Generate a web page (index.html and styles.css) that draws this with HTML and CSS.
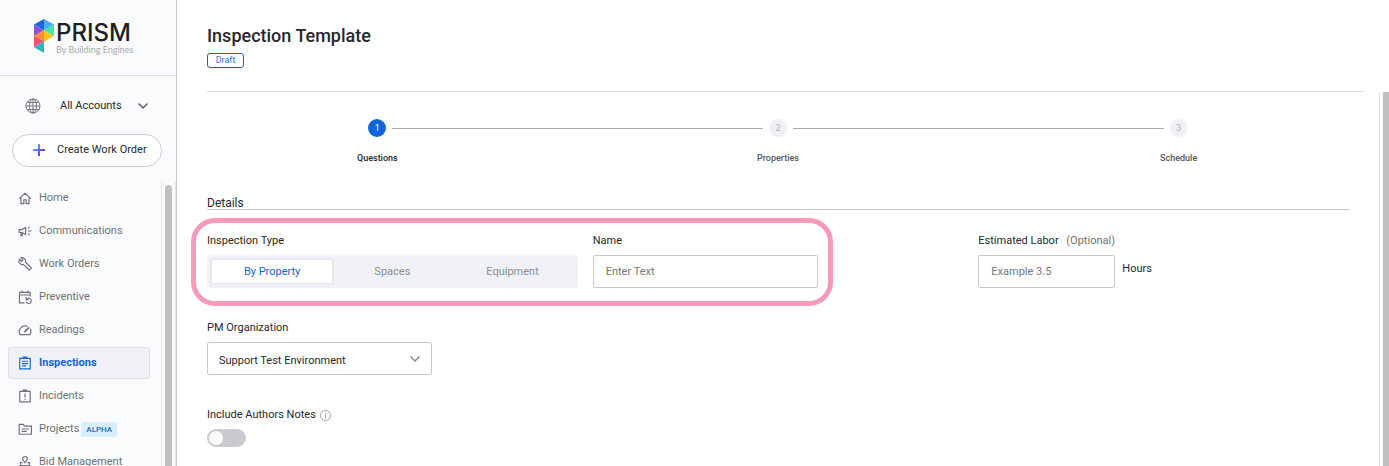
FILE: index.html
```html
<!DOCTYPE html>
<html lang="en">
<head>
    <meta charset="UTF-8">
    <meta name="viewport" content="width=device-width, initial-scale=1.0">
    <title>Prism - Inspection Template</title>
    <link rel="stylesheet" href="styles.css">
</head>
<body>
    <div class="app">
        <aside class="sidebar">
            <div class="logo">
                <svg class="logo-mark" width="20" height="34" viewBox="0 0 57 100" preserveAspectRatio="none">
                    <path fill="#1565df" d="M28.500 0L0 16l28.500 17z"/>
                    <path fill="#4badf8" d="M28.500 0L57 16 28.500 33z"/>
                    <path fill="#8a56cc" d="M0 16l28.500 17L0 50z"/>
                    <path fill="#3ee6a0" d="M57 16L28.500 33 57 50z"/>
                    <path fill="#ff8b3d" d="M28.500 33L0 50l28.500 16z"/>
                    <path fill="#fcc419" d="M28.500 33L57 50 28.500 66z"/>
                    <path fill="#fb4b70" d="M0 50l28.500 16L0 83z"/>
                    <path fill="#2ab9c4" d="M28.500 66L0 83l28.500 17z"/>
                </svg>
                <div class="logo-text">
                    <span class="logo-name">PRISM</span>
                    <span class="logo-sub">By Building Engines</span>
                </div>
            </div>

            <button class="account" type="button">
                <svg class="globe" width="16" height="16" viewBox="0 0 16 16">
                    <circle cx="8" cy="8" r="7"/>
                    <ellipse cx="8" cy="8" rx="3.500" ry="7"/>
                    <path d="M8 1v14M1 8h14M2.200 4.500h11.600M2.200 11.500h11.600"/>
                </svg>
                <span>All Accounts</span>
                <svg class="chevron" width="12" height="8" viewBox="0 0 12 8"><path d="M1.500 1.500L6 6l4.500-4.500"/></svg>
            </button>

            <button class="create" type="button">
                <svg width="14" height="14" viewBox="0 0 14 14">
                    <defs>
                        <linearGradient id="plus" x1="0" y1="0" x2="1" y2="1">
                            <stop offset="0.200" stop-color="#55a8fa"/>
                            <stop offset="0.800" stop-color="#5b35ee"/>
                        </linearGradient>
                    </defs>
                    <path fill="url(#plus)" d="M6 1h2v5h5v2H8v5H6V8H1V6h5z"/>
                </svg>
                <span>Create Work Order</span>
            </button>

            <div class="nav-scroll">
                <nav class="nav">
                    <a class="nav-item" href="#">
                        <svg viewBox="0 0 24 24"><path d="M2 13L12 4l10 9M5 11v10.500h5V15h4v6.500h5V11"/></svg>
                        <span>Home</span>
                    </a>
                    <a class="nav-item" href="#">
                        <svg viewBox="0 0 24 24"><path d="M2 9.500h5l6-3.500v12l-6-3.500H2zM5 15v5h2.500v-5M17 12H23M17 7.500l3-2.500M17 16.500l3 2.500"/></svg>
                        <span>Communications</span>
                    </a>
                    <a class="nav-item" href="#">
                        <svg viewBox="0 0 24 24"><path d="M2.500 4L6 7.500 8.500 5 5 1.500C9 0 14 3 12.700 8.500L23 19l-3.500 3.500L9 12.700C4 14 0 9 2.500 4z"/></svg>
                        <span>Work Orders</span>
                    </a>
                    <a class="nav-item" href="#">
                        <svg viewBox="0 0 24 24"><path d="M11 22H2.500V4H21v7M3 8.500h18M7 1v4M17 1v4M15 15.500A4.500 4.500 0 1 1 14 20M14 12.500v4h4"/></svg>
                        <span>Preventive</span>
                    </a>
                    <a class="nav-item" href="#">
                        <svg viewBox="0 0 24 24"><path d="M16 5.800A10 10 0 0 0 3.500 20h17a10 10 0 0 0 .500-10"/><path d="M11 15.500L19 7.500" stroke-width="3"/></svg>
                        <span>Readings</span>
                    </a>
                    <a class="nav-item active" href="#" aria-current="page">
                        <svg viewBox="0 0 24 24"><path d="M3 4h18v18H3zM9 4V2h6v2M7 9h10M7 13h10M7 17h7"/></svg>
                        <span>Inspections</span>
                    </a>
                    <a class="nav-item" href="#">
                        <svg viewBox="0 0 24 24"><path d="M3 4h18v18H3zM9 4V2h6v2M12 7.500v7M12 16.500v2.500"/></svg>
                        <span>Incidents</span>
                    </a>
                    <a class="nav-item" href="#">
                        <svg viewBox="0 0 24 24"><path d="M2 4h7l2 3h12v14H2zM6 12h13M6 16h9"/></svg>
                        <span>Projects</span>
                        <span class="tag">ALPHA</span>
                    </a>
                    <a class="nav-item" href="#">
                        <svg viewBox="0 0 24 24"><path d="M12 13c-2-3-4-4-4-6.500a4 4 0 0 1 8 0c0 2.500-2 3.500-4 6.500zM8 13H4v5h16v-5h-4M3 22h18"/></svg>
                        <span>Bid Management</span>
                    </a>
                </nav>
                <div class="nav-track"><div class="thumb"></div></div>
            </div>
        </aside>

        <main class="main">
            <header class="page-header">
                <h1>Inspection Template</h1>
                <span class="badge">Draft</span>
            </header>

            <div class="scroll-area">
                <div class="content">
                    <ol class="stepper">
                        <li class="step current">
                            <div class="step-row"><span class="step-num">1</span></div>
                            <span class="step-label">Questions</span>
                        </li>
                        <li class="step">
                            <div class="step-row"><span class="step-num">2</span></div>
                            <span class="step-label">Properties</span>
                        </li>
                        <li class="step">
                            <div class="step-row"><span class="step-num">3</span></div>
                            <span class="step-label">Schedule</span>
                        </li>
                    </ol>

                    <h2>Details</h2>

                    <form class="form">
                        <div class="form-row">
                            <div class="field">
                                <span class="label" id="type-label">Inspection Type</span>
                                <div class="segmented" role="group" aria-labelledby="type-label">
                                    <button class="segment selected" type="button">By Property</button>
                                    <button class="segment" type="button">Spaces</button>
                                    <button class="segment" type="button">Equipment</button>
                                </div>
                            </div>
                            <div class="field">
                                <label class="label" for="name">Name</label>
                                <input class="control" id="name" type="text" placeholder="Enter Text">
                            </div>
                            <div class="field">
                                <label class="label" for="labor">Estimated Labor <span class="optional">(Optional)</span></label>
                                <div class="labor">
                                    <input class="control" id="labor" type="text" placeholder="Example 3.5">
                                    <span>Hours</span>
                                </div>
                            </div>
                            <div class="callout"></div>
                        </div>

                        <div class="field">
                            <label class="label" for="org">PM Organization</label>
                            <div class="select-wrap">
                                <select class="control" id="org">
                                    <option>Support Test Environment</option>
                                </select>
                                <svg class="chevron" width="12" height="8" viewBox="0 0 12 8"><path d="M1.500 1.500L6 6l4.500-4.500"/></svg>
                            </div>
                        </div>

                        <div class="field">
                            <label class="label notes" for="notes">Include Authors Notes
                                <svg class="info" width="11" height="11" viewBox="0 0 11 11"><circle cx="5.500" cy="5.500" r="5"/><path d="M5.500 4.500V8.500M5.500 2.500v1"/></svg>
                            </label>
                            <input class="toggle" id="notes" type="checkbox" role="switch">
                        </div>
                    </form>
                </div>
                <div class="main-track"><div class="thumb"></div></div>
            </div>
        </main>
    </div>
</body>
</html>
```

FILE: styles.css
```css
* { box-sizing: border-box; }
body { margin: 0; font-family: Roboto, "Liberation Sans", sans-serif; font-size: 11px; line-height: 16px; color: #26282b; background-color: #fff; }
button, input, select { font: inherit; color: inherit; }
svg { fill: none; flex: none; }

.app { display: flex; height: 100vh; overflow: hidden; }

/* Sidebar */
.sidebar { display: flex; flex-direction: column; flex: none; width: 177px; background-color: #f9fbfd; border-right: 1px solid #c9cacf; }
.logo { display: flex; flex: none; gap: 2px; height: 76px; padding: 19px 0 0 34px; border-bottom: 1px solid #dcdde0; }
.logo-text { display: flex; flex-direction: column; padding-top: 2px; white-space: nowrap; }
.logo-name { font-family: Inter, sans-serif; font-size: 24px; line-height: 24px; font-weight: 500; color: #1d1f22; }
.logo-sub { font-family: Lato, sans-serif; font-size: 9px; line-height: 9px; color: #a9abae; }

.account { display: flex; align-items: center; flex: none; height: 24px; margin: 18px 0 16px; padding: 0 27px 0 25px; background: none; border: 0; cursor: pointer; }
.account span { flex: 1; padding-left: 19px; text-align: left; }
.globe { stroke: #74777b; }
.chevron { stroke: #5d6064; stroke-width: 1.500; }

.create { display: flex; align-items: center; gap: 11px; flex: none; height: 33px; margin: 0 14px 0 12px; padding: 0 0 2px 19px; background-color: #fff; border: 1px solid #cbccd1; border-radius: 17px; white-space: nowrap; cursor: pointer; }

.nav-scroll { display: flex; flex: 1; min-height: 0; margin-top: 15px; overflow: hidden; }
.nav { display: flex; flex-direction: column; flex: 1; gap: 1px; padding: 0 11px 0 8px; }
.nav-item { display: flex; align-items: center; flex: none; height: 32px; padding: 0 9px; border: 1px solid transparent; border-radius: 3px; color: #6f7276; text-decoration: none; white-space: nowrap; }
.nav-item svg { width: 14px; height: 14px; margin-right: 7px; stroke: currentColor; stroke-width: 2; }
.nav-item.active { color: #1264dd; font-weight: 700; background-color: #f0f1f7; border-color: #dcdee8; }
.tag { margin-left: 2px; padding: 0 5px; font-size: 8px; line-height: 15px; font-weight: 500; color: #2563b0; background-color: #d8effe; border-radius: 2px; }

.nav-track { width: 15px; padding: 3px 3px 0; background-color: #fafafa; border-left: 1px solid #e4e4e4; border-right: 1px solid #e4e4e4; }
.thumb { height: 100%; background-color: #c0c0c0; }
.nav-track .thumb { border-radius: 4px 4px 0 0; }

/* Main */
.main { display: flex; flex-direction: column; flex: 1; min-width: 0; }
.page-header { flex: none; height: 92px; margin: 0 25px 0 30px; padding-top: 24px; border-bottom: 1px solid #dedede; }
h1 { margin: 0 0 5px; font-size: 18px; line-height: 24px; font-weight: 500; }
.badge { display: block; width: 37px; font-size: 9px; line-height: 13px; text-align: center; color: #2f74de; border: 1px solid #1264dd; border-radius: 3px; }

.scroll-area { display: flex; flex: 1; min-height: 0; overflow: hidden; }
.content { flex: 1; min-width: 0; padding: 27px 30px 0; }
.main-track { flex: none; width: 10px; padding-left: 3px; background-color: #fafafa; border-left: 1px solid #e4e4e4; }

.stepper { display: grid; grid-template-columns: repeat(3, 1fr); margin: 0 -30px 31px; padding: 0; list-style: none; text-align: center; font-size: 9px; }
.step-row { display: flex; align-items: center; gap: 6px; margin-bottom: 13px; }
.step-row::before, .step-row::after { content: ""; flex: 1; height: 1px; background-color: #aaa; }
.step:first-child .step-row::before, .step:last-child .step-row::after { background: none; }
.step-num { width: 18px; line-height: 18px; border-radius: 50%; color: #b0b1b5; background-color: #f0f1f7; }
.step-label { display: block; line-height: 16px; font-weight: 500; color: #55585c; }
.current .step-num { color: #fff; background-color: #1264dd; }
.current .step-label { color: #26282b; }

h2 { margin: 0 0 23px; font-size: 12px; line-height: 12px; font-weight: 400; border-bottom: 1px solid #c8c8c8; }

.form { display: flex; flex-direction: column; gap: 32px; }
.form-row { position: relative; display: grid; grid-template-columns: repeat(3, 1fr); gap: 15px; }
.label { display: block; margin-bottom: 6px; }
.optional { margin-left: 5px; color: #6f7276; }
.control { display: block; width: 225px; height: 33px; padding: 0 12px; background-color: #fff; border: 1px solid #c8c9cc; border-radius: 2px; }
.control::placeholder { color: #74777b; opacity: 1; }

.segmented { display: grid; grid-template-columns: repeat(3, 1fr); height: 33px; padding: 5px; background-color: #f0f1f7; border-radius: 4px; }
.segment { padding: 0; color: #8b8d92; background: none; border: 0; border-radius: 2px; cursor: pointer; }
.segment.selected { color: #1264dd; background-color: #fff; box-shadow: 0 0 3px rgba(0, 0, 0, 0.15); }

.labor { display: flex; gap: 7px; }
.labor .control { width: 137px; }
.labor span { padding-top: 6px; }

.select-wrap { position: relative; width: 225px; }
select.control { padding: 5px 24px 0 11px; appearance: none; }
.select-wrap .chevron { position: absolute; top: 13px; right: 11px; stroke: #888b90; pointer-events: none; }

.notes { display: flex; align-items: center; gap: 4px; }
.info { stroke: #a4a6aa; }
.toggle { display: block; width: 39px; height: 18px; margin: 0; padding: 2px; appearance: none; background-color: #c9cacf; border-radius: 9px; cursor: pointer; }
.toggle::before { content: ""; display: block; width: 14px; height: 14px; background-color: #fafafa; border-radius: 50%; }
.toggle:checked { background-color: #1264dd; }
.toggle:checked::before { margin-left: auto; }

/* Pink ring drawn over the first two fields */
.callout { position: absolute; top: -15px; left: -16px; width: calc((100% + 15px) / 3 + 256px); height: 88px; border: 5px solid #f59aba; border-radius: 24px; pointer-events: none; }
```
